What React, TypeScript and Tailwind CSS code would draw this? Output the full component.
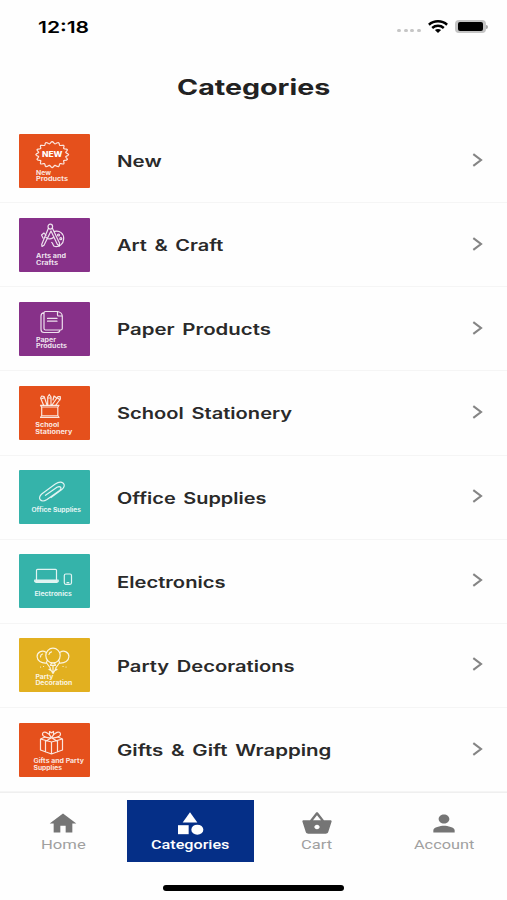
import { useLayoutEffect, useRef, useState, type ReactNode } from "react";

/** Text stretched horizontally so that it fills the given width. */
function Fit({ width, className = "", children }: { width: number; className?: string; children: ReactNode }) {
  const ref = useRef<HTMLSpanElement>(null);
  const [scale, setScale] = useState(1);
  useLayoutEffect(() => {
    if (ref.current) setScale(width / ref.current.offsetWidth);
  }, [width]);
  return (
    <span className="block" style={{ width }}>
      <span
        ref={ref}
        className={`block w-max origin-left whitespace-nowrap ${className}`}
        style={{ transform: `scaleX(${scale})` }}
      >
        {children}
      </span>
    </span>
  );
}

type Line = [text: string, x: number, y: number, width: number];

function Tile({ bg, lines, children }: { bg: string; lines: Line[]; children: ReactNode }) {
  return (
    <svg viewBox="0 0 71 54" className={`h-[54px] w-[71px] shrink-0 rounded-[1px] ${bg}`}>
      <g fill="none" stroke="#fff" strokeOpacity="0.85" strokeWidth="1.2" strokeLinecap="round" strokeLinejoin="round">
        {children}
      </g>
      <g fill="#fff" fillOpacity="0.88" className="font-['Inter',sans-serif] text-[5.6px] font-bold">
        {lines.map(([text, x, y, width]) => (
          <text key={text} x={x} y={y} textLength={width} lengthAdjust="spacingAndGlyphs">
            {text}
          </text>
        ))}
      </g>
    </svg>
  );
}

const ORANGE = "bg-[#e5501c]";
const PURPLE = "bg-[#873189]";
const TEAL = "bg-[#35b3aa]";
const YELLOW = "bg-[#e2b020]";

const burst =
  Array.from({ length: 97 }, (_, i) => {
    const a = (i / 96) * Math.PI * 2;
    const k = 0.92 + 0.08 * Math.cos(a * 16);
    return `${i ? "L" : "M"}${(33.2 + 16.4 * k * Math.cos(a)).toFixed(2)} ${(20.6 + 13 * k * Math.sin(a)).toFixed(2)}`;
  }).join("") + "Z";

const categories: { name: string; width: number; tile: ReactNode }[] = [
  {
    name: "New",
    width: 45,
    tile: (
      <Tile bg={ORANGE} lines={[["New", 17, 41, 15], ["Products", 17, 47.4, 32]]}>
        <path d={burst} />
        <text x="23" y="23.4" textLength="20.5" lengthAdjust="spacingAndGlyphs" fill="#fff" stroke="none" className="font-['Inter',sans-serif] text-[7.4px] font-extrabold">
          NEW
        </text>
      </Tile>
    ),
  },
  {
    name: "Art & Craft",
    width: 107,
    tile: (
      <Tile bg={PURPLE} lines={[["Arts and", 17, 40, 30], ["Crafts", 17, 46.5, 22]]}>
        <path d="M35.500 13.400C40.500 12 45 15.500 44.700 21c-.3 5-4.400 8.200-8.700 7.500-2.600-.4-1.400-3-3.300-4" />
        <ellipse cx="31.300" cy="8.600" rx="2.300" ry="2.500" />
        <path d="M29.300 10.500 22.700 26.500l.3 2 2-1.300L32 13l6.300 13.200M33.500 10.500l7 14.500 0 3-2.200-1.800M27 19.500c3 2 6 1.500 8-.5M24 20l-1.500-3 2.500-2 2 2.500" />
        <circle cx="39.500" cy="17" r="1" />
        <circle cx="41.800" cy="20.700" r="1" />
      </Tile>
    ),
  },
  {
    name: "Paper Products",
    width: 154,
    tile: (
      <Tile bg={PURPLE} lines={[["Paper", 17, 39.800, 20], ["Products", 17, 46.200, 31]]}>
        <path d="M26.500 9.500H38.500Q43 10.300 43.300 14V26.500Q43.300 28 41.500 28H26.500Q25 28 25 26.500V11Q25 9.500 26.500 9.500ZM38.500 9.500V13q0 1 1 1h3.800M25 10.600Q22 11 22 14V27.500Q22 30.500 25 30.500H38q2.500 0 2.800-2.200M28.500 16.400h9.500M28.500 19.200h9.500" />
      </Tile>
    ),
  },
  {
    name: "School Stationery",
    width: 175,
    tile: (
      <Tile bg={ORANGE} lines={[["School", 16.300, 41.300, 24], ["Stationery", 16.300, 47.700, 37]]}>
        <path d="M21.500 19.300h18.500l-1.200 2v8.200l1.200 2H21.500l1.200-2v-8.200zM23 21h15.800M23 29.800h15.800" />
        <path d="M24.500 19 21.600 12l1.200-2 2.400.6L28 19M22 13l3.500-1.400M28.700 19V11l1.600-2.500L32 11v8M28.700 12H32M33 19l6-8.500 2.300.2.100 2.300-4.500 6M34 14l1-4 2 1.500M38.200 11.700l2.800 2.100" />
      </Tile>
    ),
  },
  {
    name: "Office Supplies",
    width: 149,
    tile: (
      <Tile bg={TEAL} lines={[["Office Supplies", 12.500, 41.900, 49.500]]}>
        <path d="m26.500 25.300 11.500-8c3.200-2 5.600.8 2.600 3.200L28 29.500c-5.800 3.800-10.500-1.200-5-5.700l13.300-9.800c6.500-4.500 12.500.5 6.500 5.600L32 27.500" />
      </Tile>
    ),
  },
  {
    name: "Electronics",
    width: 108,
    tile: (
      <Tile bg={TEAL} lines={[["Electronics", 15.400, 41.900, 37.500]]}>
        <path d="M17.500 26V16.300q0-1 1-1H36.500q1 0 1 1V26M15.700 26.200H39.200v1.200l-1.500 1H17.200l-1.500-1zM17 27.400h21" />
        <rect x="45.300" y="20" width="7.200" height="10.300" rx="1.500" />
        <path d="M48 28.700h1.800" />
      </Tile>
    ),
  },
  {
    name: "Party Decorations",
    width: 178,
    tile: (
      <Tile bg={YELLOW} lines={[["Party", 16.400, 40.500, 18], ["Decoration", 16.400, 46.800, 37]]}>
        <ellipse cx="34" cy="17.600" rx="7.200" ry="7.400" />
        <path d="M26.900 14.200c-4-2.600-9 .2-8.800 4.600.2 4 4 6.600 9.200 6.300l.8-2.500M41.100 14.200c4-2.600 9 .2 8.800 4.600-.2 4-4 6.600-9.200 6.300l-.8-2.500M32.500 25h3l1 2.300h-5zM28 25.500l3.300 4.500M40 25.500 36.700 30M31 30.500l3 5 3-5M34 27.500v7M30 31.500l2 1M38 31.500l-2 1" />
        <path d="M21.500 19c0-1.800 1-2.700 2-3M30 16.500c.3-1.500 1.300-2.400 2.500-2.700M21.500 29h.1M24.500 28.500h.1M44 28.500h.1M47 29h.1" />
      </Tile>
    ),
  },
  {
    name: "Gifts & Gift Wrapping",
    width: 214,
    tile: (
      <Tile bg={ORANGE} lines={[["Gifts and Party", 14.500, 40.400, 50.500], ["Supplies", 14.500, 46.700, 28.500]]}>
        <path d="m21.500 16 11 3 11-3v11l-11 4-11-4zM32.500 19v12M21.500 16l4.500-2M43.500 16 39 14M26.500 17.500v11.300M38.500 17.500v11.300" />
        <path d="M32.500 14.700c-3-5.700-8.500-7.200-9-3.800-.3 3 5 4.200 9 3.800 4 .4 9.300-.8 9-3.800-.5-3.400-6-1.900-9 3.800zM32.500 14.700 28 17.500M32.500 14.700l4.500 2.800M30.500 11V8.500l2 1.300 2-1.300V11" />
      </Tile>
    ),
  },
];

const tabs = [
  { name: "Home", width: 45, icon: <path d="M10 20v-6h4v6h5v-8h3L12 3 2 12h3v8z" /> },
  {
    name: "Categories",
    width: 79,
    active: true,
    icon: (
      <>
        <path d="m12 2-5.500 9h11z" />
        <circle cx="17.500" cy="17.500" r="4.500" />
        <path d="M3 13.500h8v8H3z" />
      </>
    ),
  },
  {
    name: "Cart",
    width: 31,
    icon: (
      <path d="M17.210 9l-4.380-6.560c-.19-.28-.51-.42-.83-.42-.32 0-.64.14-.83.430L6.790 9H2c-.55 0-1 .45-1 1 0 .090.010.180.040.270l2.540 9.270c.23.840 1 1.460 1.920 1.460h13c.92 0 1.690-.62 1.930-1.460l2.540-9.270L23 10c0-.55-.45-1-1-1h-4.790zM9 9l3-4.400L15 9H9zm3 8c-1.100 0-2-.9-2-2s.9-2 2-2 2 .9 2 2-.9 2-2 2z" />
    ),
  },
  {
    name: "Account",
    width: 60,
    icon: <path d="M12 12c2.210 0 4-1.790 4-4s-1.790-4-4-4-4 1.790-4 4 1.790 4 4 4zm0 2c-2.670 0-8 1.340-8 4v2h16v-2c0-2.660-5.330-4-8-4z" />,
  },
];

function StatusBar() {
  return (
    <div className="flex h-[53px] items-center justify-between pr-[19px] pl-[38px]">
      <Fit width={51} className="text-[16.5px] leading-5 font-semibold text-black">
        12:18
      </Fit>
      <div className="flex items-center">
        <div className="mt-[8px] mr-[7px] flex gap-[2.7px]">
          {[0, 1, 2, 3].map((i) => (
            <span key={i} className="h-[3.5px] w-[4px] rounded-full bg-[#c6c6c6]" />
          ))}
        </div>
        <svg viewBox="0 0 20 13" className="mr-[7px] h-[13px] w-5" fill="none" stroke="#000" strokeWidth="2.5">
          <path d="M.9 4.800C6 .2 14 .2 19.100 4.800M4.200 8c3.300-2.900 8.300-2.900 11.600 0" />
          <path d="M6.900 10.100c1.800-1.400 4.400-1.400 6.200 0L10 12.900z" fill="#000" stroke="none" />
        </svg>
        <div className="flex h-[13px] w-[31px] rounded-[4px] bg-[#c4c4c4] px-[3px] py-[2px]">
          <span className="grow rounded-[2px] bg-black" />
        </div>
        <span className="h-1 w-[2px] rounded-r-full bg-[#a8a8a8]" />
      </div>
    </div>
  );
}

export default function App() {
  return (
    <div className="flex h-[900px] w-[507px] flex-col overflow-hidden bg-[#fefefe] font-['Inter',sans-serif]">
      <StatusBar />
      <header className="flex h-[66px] justify-center pt-[20px]">
        <Fit width={153} className="text-[21.5px] leading-7 font-bold text-[#222]">
          Categories
        </Fit>
      </header>
      <main>
        {categories.map(({ name, width, tile }) => (
          <div key={name} className="flex h-[84.15px] items-center border-b border-[#f5f5f5] pr-[24px] pl-[19px]">
            {tile}
            <div className="ml-[26.5px] grow pt-[3px]">
              <Fit width={width} className="text-[15.5px] leading-5 font-semibold text-[#2a2a2a] [word-spacing:2px]">
                {name}
              </Fit>
            </div>
            <svg viewBox="0 0 11 14" className="mb-[2px] h-3.5 w-[11px]" fill="none" stroke="#858585" strokeWidth="2.1">
              <path d="m1.300 1.200 7.700 5.800-7.700 5.800" />
            </svg>
          </div>
        ))}
      </main>
      <nav className="flex h-[71px] shrink-0 border-t border-[#efefef] pt-[7px]">
        {tabs.map(({ name, width, icon, active }) => (
          <div
            key={name}
            className={`flex h-[62px] flex-1 flex-col items-center pt-[10px] ${active ? "bg-[#052f87] text-white" : "text-[#757575]"}`}
          >
            <svg viewBox="0 0 24 24" preserveAspectRatio="none" className="h-[27px] w-8 shrink-0" fill="currentColor">
              {icon}
            </svg>
            <Fit
              width={width}
              className={`font-['Roboto',sans-serif] text-[13.3px] leading-[15px] ${active ? "font-medium text-white" : "text-[#a0a0a0]"}`}
            >
              {name}
            </Fit>
          </div>
        ))}
      </nav>
      <div className="mx-auto mt-[22px] h-[6px] w-[181px] shrink-0 rounded-full bg-black" />
    </div>
  );
}
